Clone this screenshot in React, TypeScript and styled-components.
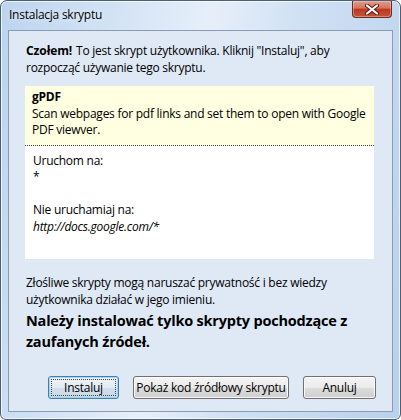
import React from "react";
import styled, { createGlobalStyle } from "styled-components";

const GlobalStyle = createGlobalStyle`
  html, body {
    margin: 0;
    padding: 0;
    background: #ffffff;
  }
  body {
    font-family: "Open Sans", "Noto Sans", sans-serif;
    font-size: 12px;
    letter-spacing: -0.25px;
    color: #000;
  }
`;

const Window = styled.div`
  box-sizing: border-box;
  width: 401px;
  height: 420px;
  display: flex;
  flex-direction: column;
  padding: 0 7px 7px;
  border: 1px solid #4a5f78;
  border-radius: 7px 7px 6px 6px;
  background: linear-gradient(
    100deg,
    #bcd4ef 0%,
    #d3e3f5 25%,
    #e6eff9 45%,
    #cfe0f3 65%,
    #b9d1ec 100%
  );
  box-shadow: inset 0 0 0 1px rgba(255, 255, 255, 0.7);
`;

const TitleBar = styled.div`
  height: 29px;
  display: flex;
  align-items: flex-start;
`;

const Title = styled.div`
  font-size: 12px;
  line-height: 16px;
  margin: 6px 0 0 1px;
  color: #000;
  text-shadow: 0 0 6px rgba(255, 255, 255, 0.9);
`;

const CloseButton = styled.div`
  margin-left: auto;
  margin-right: 1px;
  width: 40px;
  height: 17px;
  box-sizing: border-box;
  border: 1px solid #6b2a22;
  border-top: none;
  border-radius: 0 0 4px 4px;
  background: linear-gradient(
    to bottom,
    #e39b8b 0%,
    #d5735f 45%,
    #bb3822 50%,
    #c4533a 100%
  );
  box-shadow: inset 0 0 0 1px rgba(255, 220, 210, 0.4);
  display: flex;
  align-items: center;
  justify-content: center;
`;

const Client = styled.div`
  flex: 1;
  display: flex;
  flex-direction: column;
  border: 1px solid #8a9bb2;
  background: #dfe8f5;
  padding: 12px 18px 12px 16px;
`;

const Para = styled.div<{ $bold?: boolean; $big?: boolean }>`
  font-size: ${(p) => (p.$big ? "14.5px" : "12px")};
  line-height: ${(p) => (p.$big ? "21px" : "16.5px")};
  font-weight: ${(p) => (p.$bold ? 700 : 400)};
  letter-spacing: ${(p) => (p.$big ? "-0.2px" : "-0.25px")};
  padding-left: 1px;
`;

const Strong = styled.strong`
  font-weight: 700;
  letter-spacing: -0.1px;
  margin-right: 1px;
`;

const InfoBox = styled.div`
  margin-top: 10px;
  display: flex;
  flex-direction: column;
`;

const ScriptHead = styled.div`
  background: #ffffe1;
  padding: 3px 6px 6px 7px;
  border-bottom: 1px dotted #444;
  line-height: 16.5px;
`;

const ScriptName = styled.div`
  font-weight: 700;
`;

const Includes = styled.div`
  background: #ffffff;
  padding: 7px 8px 24px;
  line-height: 16.5px;
`;

const Label = styled.div<{ $gap?: boolean }>`
  margin-top: ${(p) => (p.$gap ? "16.5px" : "0")};
`;

const Pattern = styled.div<{ $italic?: boolean }>`
  font-style: ${(p) => (p.$italic ? "italic" : "normal")};
`;

const Warning = styled.div`
  margin-top: 16px;
  display: flex;
  flex-direction: column;
  gap: 2px;
`;

const ButtonRow = styled.div`
  margin-top: auto;
  display: flex;
  justify-content: flex-end;
  gap: 14px;
  margin-right: -2px;
`;

const Button = styled.button<{ $width: number; $default?: boolean }>`
  width: ${(p) => p.$width}px;
  height: 23px;
  box-sizing: border-box;
  font-family: "Open Sans", "Noto Sans", sans-serif;
  font-size: 12px;
  letter-spacing: -0.25px;
  white-space: nowrap;
  color: #000;
  border-radius: 3px;
  padding: 0;
  position: relative;
  border: 1px solid ${(p) => (p.$default ? "#3c7fb1" : "#707070")};
  background: ${(p) =>
    p.$default
      ? "linear-gradient(to bottom, #eef3f8 0%, #e3ebf3 50%, #d3dfeb 51%, #c9d7e6 100%)"
      : "linear-gradient(to bottom, #f4f4f4 0%, #ebebeb 50%, #dddddd 51%, #cfcfcf 100%)"};
  box-shadow: inset 0 0 0 1px
    ${(p) => (p.$default ? "rgba(160, 210, 240, 0.9)" : "rgba(255, 255, 255, 0.8)")};

  &::after {
    content: "";
    display: ${(p) => (p.$default ? "block" : "none")};
    position: absolute;
    inset: 2px;
    border: 1px dotted #444;
  }
`;

export default function App() {
  return (
    <>
      <GlobalStyle />
      <Window>
        <TitleBar>
          <Title>Instalacja skryptu</Title>
          <CloseButton>
            <svg width="14" height="11" viewBox="0 0 14 11">
              <path
                d="M2 1.5 L12 9.5 M12 1.5 L2 9.5"
                stroke="#5a1a12"
                strokeWidth="4"
                strokeLinecap="round"
              />
              <path
                d="M2 1.5 L12 9.5 M12 1.5 L2 9.5"
                stroke="#ffffff"
                strokeWidth="2.2"
                strokeLinecap="round"
              />
            </svg>
          </CloseButton>
        </TitleBar>
        <Client>
          <Para>
            <Strong>Czołem!</Strong> To jest skrypt użytkownika. Kliknij
            "Instaluj", aby
            <br />
            rozpocząć używanie tego skryptu.
          </Para>
          <InfoBox>
            <ScriptHead>
              <ScriptName>gPDF</ScriptName>
              Scan webpages for pdf links and set them to open with Google PDF
              viewver.
            </ScriptHead>
            <Includes>
              <Label>Uruchom na:</Label>
              <Pattern>*</Pattern>
              <Label $gap>Nie uruchamiaj na:</Label>
              <Pattern $italic>http://docs.google.com/*</Pattern>
            </Includes>
          </InfoBox>
          <Warning>
            <Para>
              Złośliwe skrypty mogą naruszać prywatność i bez wiedzy
              użytkownika działać w jego imieniu.
            </Para>
            <Para $bold $big>
              Należy instalować tylko skrypty pochodzące z zaufanych źródeł.
            </Para>
          </Warning>
          <ButtonRow>
            <Button $width={71} $default>
              Instaluj
            </Button>
            <Button $width={156}>Pokaż kod źródłowy skryptu</Button>
            <Button $width={73}>Anuluj</Button>
          </ButtonRow>
        </Client>
      </Window>
    </>
  );
}
